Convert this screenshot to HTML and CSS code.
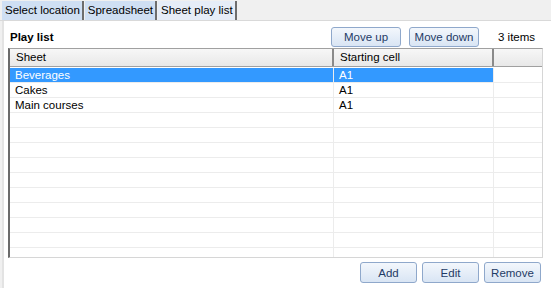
FILE: index.html
```html
<!DOCTYPE html>
<html>
<head>
<link rel="stylesheet" href="styles.css">
</head>
<body>
<div class="tabs">
    <div class="tab">Select location</div>
    <div class="tab">Spreadsheet</div>
    <div class="tab active">Sheet play list</div>
</div>

<div class="panel">
    <div class="toolbar">
        <span class="title">Play list</span>
        <button class="btn move">Move up</button>
        <button class="btn move">Move down</button>
        <span class="count">3 items</span>
    </div>

    <div class="grid">
        <div class="row head">
            <div class="cell c1">Sheet</div>
            <div class="cell c2">Starting cell</div>
            <div class="cell c3"></div>
        </div>
        <div class="row selected">
            <div class="cell c1">Beverages</div>
            <div class="cell c2">A1</div>
            <div class="cell c3"></div>
        </div>
        <div class="row">
            <div class="cell c1">Cakes</div>
            <div class="cell c2">A1</div>
            <div class="cell c3"></div>
        </div>
        <div class="row">
            <div class="cell c1">Main courses</div>
            <div class="cell c2">A1</div>
            <div class="cell c3"></div>
        </div>
        <div class="row"><div class="cell c1"></div><div class="cell c2"></div><div class="cell c3"></div></div>
        <div class="row"><div class="cell c1"></div><div class="cell c2"></div><div class="cell c3"></div></div>
        <div class="row"><div class="cell c1"></div><div class="cell c2"></div><div class="cell c3"></div></div>
        <div class="row"><div class="cell c1"></div><div class="cell c2"></div><div class="cell c3"></div></div>
        <div class="row"><div class="cell c1"></div><div class="cell c2"></div><div class="cell c3"></div></div>
        <div class="row"><div class="cell c1"></div><div class="cell c2"></div><div class="cell c3"></div></div>
        <div class="row"><div class="cell c1"></div><div class="cell c2"></div><div class="cell c3"></div></div>
        <div class="row"><div class="cell c1"></div><div class="cell c2"></div><div class="cell c3"></div></div>
        <div class="row"><div class="cell c1"></div><div class="cell c2"></div><div class="cell c3"></div></div>
        <div class="row"><div class="cell c1"></div><div class="cell c2"></div><div class="cell c3"></div></div>
    </div>

    <div class="actions">
        <button class="btn small">Add</button>
        <button class="btn small">Edit</button>
        <button class="btn small">Remove</button>
    </div>
</div>
</body>
</html>
```

FILE: styles.css
```css
body {
    margin: 0;
    background: #f0f0f0;
    font-family: "Liberation Sans", Arial, sans-serif;
    font-size: 11px;
    color: #000;
    width: 551px;
    height: 288px;
    overflow: hidden;
}

.tabs {
    display: flex;
    height: 21px;
    padding-left: 2px;
    padding-top: 1px;
    box-sizing: border-box;
    border-bottom: 1px solid #d9d9d9;
}

.tab {
    background: #cfdff3;
    padding: 3px 2px 0 3px;
    border-right: 2px solid #6d6d6d;
    height: 19px;
    box-sizing: border-box;
    margin-right: 1px;
    font-size: 11.5px;
}

.tab.active {
    background: #e6edf7;
}

.panel {
    background: #fff;
    margin-left: 2px;
    border-left: 2px solid #e3e3e3;
    height: 267px;
    padding: 5px 8px 0 4px;
    box-sizing: border-box;
}

.toolbar {
    display: flex;
    align-items: center;
    height: 21px;
}

.title {
    font-weight: bold;
    font-size: 11.5px;
    margin-left: 2px;
    flex: 1;
}

.btn {
    font-family: "Liberation Sans", Arial, sans-serif;
    font-size: 11.5px;
    color: #1f3b66;
    background: linear-gradient(#f3f7fc, #d9e5f4);
    border: 1px solid #8fa8cb;
    border-radius: 3px;
    padding: 0;
    height: 20px;
}

.btn.move {
    width: 70px;
    margin-right: 8px;
}

.count {
    width: 56px;
    padding-left: 11px;
    box-sizing: border-box;
    font-size: 11.5px;
}

.grid {
    margin-top: 1px;
    height: 210px;
    border-top: 1px solid #a0a0a0;
    border-left: 2px solid #6a6a6a;
    border-bottom: 1px solid #d6d6d6;
    border-right: 1px solid #d6d6d6;
    overflow: hidden;
    box-sizing: border-box;
}

.row {
    display: flex;
    height: 14px;
    border-bottom: 1px solid #ececec;
    line-height: 14px;
    font-size: 11.5px;
}

.row.head {
    height: 17px;
    line-height: 16px;
    background: linear-gradient(#f7f7f7, #e8e8e8);
    border-bottom: 1px solid #a0a0a0;
    margin-bottom: 1px;
}

.cell {
    box-sizing: border-box;
    padding-left: 5px;
    border-right: 1px solid #ececec;
    white-space: nowrap;
}

.c1 { width: 324px; }
.c2 { width: 160px; }
.c3 { flex: 1; border-right: none; }

.head .cell {
    border-right: 2px solid #8a8a8a;
    padding-left: 6px;
}

.head .c3 { border-right: none; }

.selected .c1,
.selected .c2 {
    background: #3399ff;
    color: #fff;
}

.actions {
    display: flex;
    justify-content: flex-end;
    gap: 5px;
    margin-top: 4px;
    margin-right: 2px;
}

.btn.small {
    width: 57px;
    height: 21px;
}
```
